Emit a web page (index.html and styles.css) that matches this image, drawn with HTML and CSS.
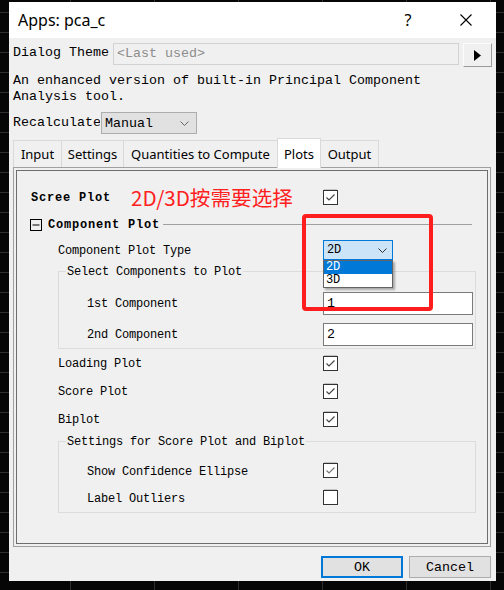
FILE: index.html
```html
<!DOCTYPE html>
<html lang="en">
<head>
    <meta charset="UTF-8">
    <title>Apps: pca_c</title>
    <link rel="stylesheet" href="styles.css">
</head>
<body>
    <div class="dialog">
        <div class="titlebar">
            <span class="title">Apps: pca_c</span>
            <span class="help">?</span>
            <svg class="close" width="12" height="12" viewBox="0 0 12 12"><path d="M0.5 0.5 L11.5 11.5 M11.5 0.5 L0.5 11.5" stroke="#000" stroke-width="1.1" fill="none"/></svg>
        </div>

        <div class="dialog-body">
            <div class="theme-row">
                <span class="theme-label">Dialog Theme</span>
                <div class="theme-input">&lt;Last used&gt;</div>
                <div class="theme-btn"><svg width="7" height="11" viewBox="0 0 7 11"><polygon points="0,0 7,5.5 0,11" fill="#000"/></svg></div>
            </div>

            <p class="desc">An enhanced version of built-in Principal Component<br>Analysis tool.</p>

            <div class="recalc-row">
                <span class="recalc-label">Recalculate</span>
                <div class="select">
                    <span>Manual</span>
                    <svg width="9" height="5" viewBox="0 0 9 5"><path d="M0.5 0.5 L4.5 4.5 L8.5 0.5" stroke="#666" fill="none"/></svg>
                </div>
            </div>

            <div class="tabs">
                <div class="tab tab-input">Input</div>
                <div class="tab tab-settings">Settings</div>
                <div class="tab tab-quant">Quantities to Compute</div>
                <div class="tab tab-plots active">Plots</div>
                <div class="tab tab-output">Output</div>
            </div>

            <div class="panel">
                <div class="panel-inner">
                    <div class="row row-scree">
                        <span class="lbl bold">Scree Plot</span>
                        <span class="check"><svg width="13" height="13" viewBox="0 0 13 13"><path d="M2.5 6.5 L5 9 L10.5 3.5" stroke="#444" stroke-width="1.2" fill="none"/></svg></span>
                    </div>

                    <div class="section-head">
                        <svg width="12" height="12" viewBox="0 0 12 12"><rect x="0.5" y="0.5" width="11" height="11" fill="none" stroke="#000"/><path d="M2.5 6 H9.5" stroke="#000"/></svg>
                        <span class="bold section-title">Component Plot</span>
                        <span class="section-line"></span>
                    </div>

                    <div class="row row-type indent">
                        <span class="lbl">Component Plot Type</span>
                        <div class="combo">
                            <span>2D</span>
                            <svg width="9" height="5" viewBox="0 0 9 5"><path d="M0.5 0.5 L4.5 4.5 L8.5 0.5" stroke="#333" fill="none"/></svg>
                        </div>
                    </div>

                    <fieldset class="group group-select">
                        <legend>Select Components to Plot</legend>
                        <div class="row row-input">
                            <span class="lbl">1st Component</span>
                            <div class="text-input">1</div>
                        </div>
                        <div class="row row-input second">
                            <span class="lbl">2nd Component</span>
                            <div class="text-input">2</div>
                        </div>
                    </fieldset>

                    <div class="row row-check indent">
                        <span class="lbl">Loading Plot</span>
                        <span class="check"><svg width="13" height="13" viewBox="0 0 13 13"><path d="M2.5 6.5 L5 9 L10.5 3.5" stroke="#444" stroke-width="1.2" fill="none"/></svg></span>
                    </div>
                    <div class="row row-check indent">
                        <span class="lbl">Score Plot</span>
                        <span class="check"><svg width="13" height="13" viewBox="0 0 13 13"><path d="M2.5 6.5 L5 9 L10.5 3.5" stroke="#444" stroke-width="1.2" fill="none"/></svg></span>
                    </div>
                    <div class="row row-check indent">
                        <span class="lbl">Biplot</span>
                        <span class="check"><svg width="13" height="13" viewBox="0 0 13 13"><path d="M2.5 6.5 L5 9 L10.5 3.5" stroke="#444" stroke-width="1.2" fill="none"/></svg></span>
                    </div>

                    <fieldset class="group group-score">
                        <legend>Settings for Score Plot and Biplot</legend>
                        <div class="row row-sub">
                            <span class="lbl">Show Confidence Ellipse</span>
                            <span class="check"><svg width="13" height="13" viewBox="0 0 13 13"><path d="M2.5 6.5 L5 9 L10.5 3.5" stroke="#777" stroke-width="1.2" fill="none"/></svg></span>
                        </div>
                        <div class="row row-sub">
                            <span class="lbl">Label Outliers</span>
                            <span class="check"></span>
                        </div>
                    </fieldset>
                </div>

                <!-- annotation and open dropdown lie over the panel -->
                <div class="note">2D/3D按需要选择</div>
                <div class="highlight"></div>
                <div class="dropdown-list">
                    <div class="dd-item selected">2D</div>
                    <div class="dd-item">3D</div>
                </div>
            </div>

            <div class="buttons">
                <div class="btn btn-ok">OK</div>
                <div class="btn">Cancel</div>
            </div>
        </div>
    </div>
</body>
</html>
```

FILE: styles.css
```css
html, body {
    height: 100%;
}

body {
    margin: 0;
    overflow: hidden;
    background-color: #060606;
    background-image:
        linear-gradient(#2f2f2f 1px, transparent 1px),
        linear-gradient(90deg, #2f2f2f 1px, transparent 1px);
    background-size: 84px 20px;
    background-position: 70px 12px;
}

.dialog {
    margin: 2px 0 0 9px;
    width: 487px;
    height: 579px;
    background-color: #f0f0f0;
    display: flex;
    flex-direction: column;
}

.titlebar {
    height: 36px;
    flex: none;
    background-color: #fff;
    display: flex;
    align-items: center;
    padding: 0 24px 0 9px;
    font-family: "Noto Sans", sans-serif;
    font-size: 16px;
    color: #000;
}

.title {
    flex: 1;
}

.help {
    width: 16px;
    text-align: center;
    margin-right: 44px;
}

.dialog-body {
    padding: 5px 4px 3px 4px;
    font-family: "Liberation Mono", monospace;
    font-size: 13.33px;
    color: #000;
}

/* theme row */
.theme-row {
    display: flex;
    align-items: flex-start;
    height: 24px;
}

.theme-label {
    width: 96px;
    margin-right: 4px;
    line-height: 20px;
}

.theme-input {
    width: 346px;
    height: 22px;
    box-sizing: border-box;
    border: 1px solid #d2d2d2;
    padding-left: 3px;
    line-height: 20px;
    color: #8c8c8c;
}

.theme-btn {
    width: 29px;
    height: 24px;
    margin-left: 4px;
    box-sizing: border-box;
    border: 1px solid;
    border-color: #fdfdfd #9a9a9a #9a9a9a #fdfdfd;
    display: flex;
    align-items: center;
    justify-content: center;
}

.desc {
    margin: 6px 0 0;
    line-height: 16px;
}

/* recalculate row */
.recalc-row {
    display: flex;
    height: 22px;
    margin-top: 7px;
}

.recalc-label {
    width: 87px;
    margin-right: 1px;
    overflow: hidden;
    white-space: nowrap;
    line-height: 22px;
}

.select {
    width: 96px;
    height: 22px;
    box-sizing: border-box;
    border: 1px solid #adadad;
    background-color: #e1e1e1;
    display: flex;
    align-items: center;
    justify-content: space-between;
    padding: 0 7px 0 3px;
}

/* tabs */
.tabs {
    position: relative;
    z-index: 1;
    display: flex;
    align-items: flex-end;
    height: 29px;
    margin-top: 4px;
    font-family: "Noto Sans", sans-serif;
    font-size: 13px;
}

.tab {
    height: 27px;
    box-sizing: border-box;
    border: 1px solid #d9d9d9;
    border-bottom: none;
    margin-right: -1px;
    display: flex;
    align-items: center;
    justify-content: center;
    background-color: #f0f0f0;
}

.tab.active {
    position: relative;
    height: 30px;
    margin-bottom: -1px;
    background-color: #fff;
}

.tab-input { width: 49px; }
.tab-settings { width: 63px; }
.tab-quant { width: 155px; }
.tab-plots { width: 44px; }
.tab-output { width: 59px; }

/* panel */
.panel {
    position: relative;
    width: 478px;
    height: 380px;
    box-sizing: border-box;
    border: 1px solid #a0a0a0;
    padding: 2px;
}

.panel-inner {
    height: 100%;
    box-sizing: border-box;
    border: 1px solid #6d6d6d;
    padding-top: 12px;
    font-size: 12px;
    letter-spacing: -0.2px;
}

.bold {
    font-weight: bold;
    letter-spacing: 0.8px;
}

.row {
    display: grid;
    grid-template-columns: 306px auto;
    align-items: center;
}

.lbl {
    padding-top: 2px;
}

.row-scree {
    height: 28px;
}

.row-scree .lbl {
    padding-left: 14px;
}

.indent .lbl {
    padding-left: 41px;
}

.row-type {
    height: 24px;
}

.row-check {
    height: 28px;
}

.section-head {
    height: 27px;
    display: flex;
    align-items: center;
    padding-left: 13px;
}

.section-title {
    margin-left: 6px;
    padding-top: 1px;
}

.section-line {
    flex: 1;
    height: 1px;
    background-color: #a0a0a0;
    margin: 0 15px 0 3px;
}

.check {
    width: 15px;
    height: 15px;
    box-sizing: border-box;
    border: 1px solid #333;
    background-color: #fff;
    box-shadow: 0 -2px 0 -1px #c4c4c4;
}

.check svg {
    display: block;
}

.combo {
    width: 70px;
    height: 20px;
    box-sizing: border-box;
    border: 1px solid #0078d7;
    background-color: #cce4f7;
    display: flex;
    align-items: center;
    justify-content: space-between;
    padding: 0 5px 0 3px;
}

/* group boxes */
.group {
    margin: 0 0 0 41px;
    width: 418px;
    min-inline-size: 0;
    box-sizing: border-box;
    border: 1px solid #dcdcdc;
}

.group legend {
    margin-left: 7px;
    padding: 1px 1px 0;
    line-height: 16px;
}

.group .row {
    grid-template-columns: 264px auto;
}

.group .lbl {
    padding-left: 28px;
}

.group-select {
    margin-top: 1px;
    padding: 11px 1px 2px 0;
}

.row-input {
    height: 24px;
}

.row-input.second {
    margin-top: 7px;
}

.text-input {
    width: 150px;
    height: 23px;
    box-sizing: border-box;
    border: 1px solid #7a7a7a;
    background-color: #fff;
    padding-left: 3px;
    font-size: 13.33px;
    letter-spacing: 0;
    line-height: 21px;
}

.group-score {
    padding: 7px 1px 1px 0;
}

.row-sub {
    height: 27px;
}

.row-sub .lbl {
    padding-top: 3px;
}

/* overlays */
.note {
    position: absolute;
    left: 117px;
    top: 17px;
    font-family: "Noto Sans CJK SC", sans-serif;
    font-size: 20.6px;
    line-height: 24px;
    color: #ff2020;
}

.highlight {
    position: absolute;
    left: 288px;
    top: 46px;
    width: 131px;
    height: 97px;
    box-sizing: border-box;
    border: 4px solid #ff1d1d;
    border-radius: 4px;
}

.dropdown-list {
    position: absolute;
    left: 309px;
    top: 92px;
    width: 70px;
    box-sizing: border-box;
    border: 1px solid #646464;
    background-color: #fff;
    box-shadow: 2px 2px 2px rgba(0, 0, 0, 0.3);
    font-size: 12px;
    letter-spacing: -0.2px;
}

.dd-item {
    height: 13px;
    line-height: 13px;
    padding-left: 2px;
}

.dd-item.selected {
    background-color: #0078d7;
    color: #fff;
}

/* buttons */
.buttons {
    display: flex;
    justify-content: flex-end;
    gap: 6px;
    margin: 9px 1px 0 0;
}

.btn {
    width: 82px;
    height: 22px;
    box-sizing: border-box;
    border: 1px solid #adadad;
    background-color: #e1e1e1;
    display: flex;
    align-items: center;
    justify-content: center;
}

.btn-ok {
    border: 2px solid #0078d7;
}
```
